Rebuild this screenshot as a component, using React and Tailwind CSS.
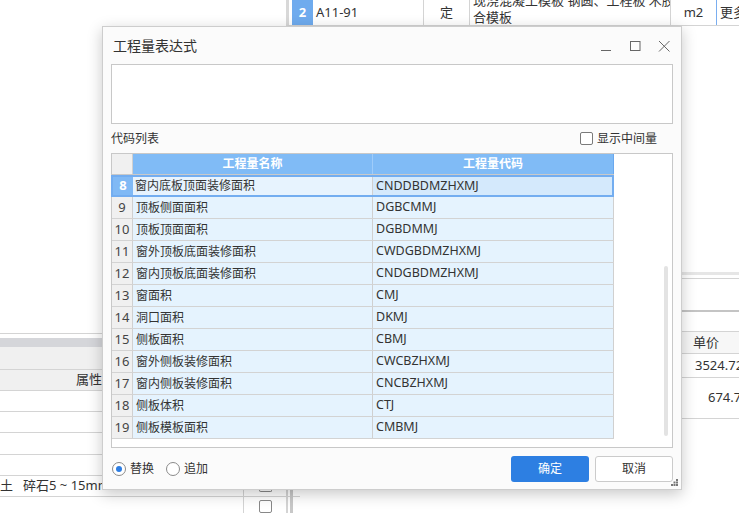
import { useState } from "react";

const rows = [
  ["8", "窗内底板顶面装修面积", "CNDDBDMZHXMJ"],
  ["9", "顶板侧面面积", "DGBCMMJ"],
  ["10", "顶板顶面面积", "DGBDMMJ"],
  ["11", "窗外顶板底面装修面积", "CWDGBDMZHXMJ"],
  ["12", "窗内顶板底面装修面积", "CNDGBDMZHXMJ"],
  ["13", "窗面积", "CMJ"],
  ["14", "洞口面积", "DKMJ"],
  ["15", "侧板面积", "CBMJ"],
  ["16", "窗外侧板装修面积", "CWCBZHXMJ"],
  ["17", "窗内侧板装修面积", "CNCBZHXMJ"],
  ["18", "侧板体积", "CTJ"],
  ["19", "侧板模板面积", "CMBMJ"],
];

const font = { fontFamily: '"Noto Sans", "Noto Sans CJK SC", sans-serif' };

function Background() {
  return (
    <>
      {/* 上方定额行 */}
      <div className="absolute left-[286px] top-0 right-0 h-[26px] flex border-b border-[#d4d4d4] border-l-[3px] border-l-[#d8d8d8] text-[13px] text-[#333] bg-white">
        <div className="w-[3px]" />
        <div className="w-[21px] bg-[#6fabee] text-white font-bold flex items-center justify-center">2</div>
        <div className="w-[110px] pl-[3px] flex items-center">A11-91</div>
        <div className="w-[46px] border-l border-[#d4d4d4] flex items-center justify-center">定</div>
        <div className="w-[201px] border-l border-[#d4d4d4] pl-[3px] leading-[17px] overflow-hidden whitespace-nowrap">
          <div className="-mt-[8px]">现浇混凝土模板 钢圆、工程板 木胶</div>
          <div>合模板</div>
        </div>
        <div className="w-[46px] border-l border-[#d4d4d4] flex items-center justify-center">m2</div>
        <div className="flex-1 border-l border-[#7aaef0] pl-[3px] flex items-center whitespace-nowrap overflow-hidden">更多</div>
      </div>

      {/* 左下属性面板 */}
      <div className="absolute left-0 top-[333px] w-[300px] bottom-0 flex flex-col border-t border-[#d4d4d4] text-[13px] text-[#333]">
        <div className="h-[4px] bg-white" />
        <div className="h-[9px] bg-[#d5d6da]" />
        <div className="h-[23px] bg-[#f0f0f0] border-b border-[#d4d4d4]" />
        <div className="h-[21px] bg-[#f0f0f0] border-b border-[#d4d4d4] flex items-center pl-[76px]">属性</div>
        <div className="h-[21px] border-b border-[#d4d4d4]" />
        <div className="h-[21px] border-b border-[#d4d4d4]" />
        <div className="h-[22px] border-b border-[#d4d4d4]" />
        <div className="h-[21px] border-b border-[#d4d4d4]" />
        <div className="h-[21px] border-b border-[#d4d4d4] flex items-center whitespace-nowrap">
          <span className="w-[23px]">土</span>
          <span>碎石5 ~ 15mm</span>
        </div>
      </div>
      <div className="absolute left-[243px] top-[490px] w-[50px] bottom-0 flex border-l border-[#d4d4d4]">
        <div className="w-[42px] flex flex-col items-center">
          <div className="w-[13px] h-[2px] border-b border-x border-[#888] rounded-b-[2px]" />
          <div className="mt-[8px] w-[13px] h-[14px] border border-[#888] rounded-[2px]" />
        </div>
        <div className="w-[2px] bg-[#d4d4d4]" />
        <div className="ml-[2px] w-[3px] bg-[#c8c8c8]" />
      </div>

      {/* 右侧价格面板 */}
      <div className="absolute left-[682px] right-0 top-[272px] flex flex-col text-[13px] text-[#333] whitespace-nowrap">
        <div className="h-[3px] bg-[#e6e6e6]" />
        <div className="h-[4px] border-b border-[#d4d4d4]" />
        <div className="h-[33px] border-b-2 border-[#c4c4c4]" />
        <div className="h-[20px] border-b border-[#d4d4d4]" />
        <div className="h-[22px] border-b border-[#d4d4d4] bg-[#f7f7f7] flex items-center pl-[11px]">单价</div>
        <div className="h-[24px] border-b border-[#d4d4d4] flex items-center pl-[13px]">3524.72</div>
        <div className="h-[41px] border-b border-[#d4d4d4] flex items-center pl-[26px]">674.7</div>
      </div>
    </>
  );
}

function Radio({ checked, label, onClick }) {
  return (
    <button onClick={onClick} className="flex items-center gap-[4px] text-[12px] text-[#333]">
      <span className="w-[14px] h-[14px] rounded-full border border-[#8a8a8a] bg-white flex items-center justify-center">
        {checked && <span className="w-[6px] h-[6px] rounded-full bg-[#2c7de3]" />}
      </span>
      {label}
    </button>
  );
}

function Dialog() {
  const [mode, setMode] = useState("replace");
  const [showMid, setShowMid] = useState(false);

  return (
    <div className="absolute left-[102px] top-[26px] w-[580px] h-[464px] bg-[#fbfbfb] border border-[#cdcdcd] shadow-[0_4px_14px_rgba(0,0,0,0.22)] flex flex-col px-[8px]">
      {/* 标题栏 */}
      <div className="h-[37px] flex items-center justify-between">
        <span className="pl-[2px] text-[14px] text-[#333]">工程量表达式</span>
        <div className="flex items-center gap-[17px] pr-[3px] text-[#666]">
          <svg width="12" height="12" viewBox="0 0 12 12"><path d="M1 10.5h10" stroke="#666" strokeWidth="1" /></svg>
          <svg width="12" height="12" viewBox="0 0 12 12"><rect x="1.5" y="1.5" width="9.5" height="9" fill="none" stroke="#666" strokeWidth="1" /></svg>
          <svg width="12" height="12" viewBox="0 0 12 12"><path d="M1 1l10.5 10.5M11.5 1L1 11.5" stroke="#666" strokeWidth="1" /></svg>
        </div>
      </div>

      {/* 表达式输入 */}
      <textarea className="h-[60px] w-full resize-none bg-white border border-[#c8c8c8] outline-none" />

      {/* 代码列表 */}
      <div className="h-[29px] flex items-center justify-between text-[12px] text-[#333]">
        <span>代码列表</span>
        <button onClick={() => setShowMid(!showMid)} className="flex items-center gap-[4px] pr-[16px]">
          <span className="w-[13px] h-[13px] border border-[#7a7a7a] rounded-[2px] bg-white" />
          显示中间量
        </button>
      </div>

      {/* 表格 */}
      <div className="h-[295px] bg-white border border-[#c8c8c8] flex">
        <div className="w-[502px] flex flex-col">
          <div className="h-[21px] flex border-b border-[#c9c9c9]">
            <div className="w-[21px] bg-[#f0f0f0] border-r border-[#d0d0d0]" />
            <div className="w-[240px] bg-[#80bbf6] text-white font-bold text-[12px] flex items-center justify-center border-r border-[#9fccfa]">工程量名称</div>
            <div className="w-[241px] bg-[#80bbf6] text-white font-bold text-[12px] flex items-center justify-center border-r border-[#6aa8ee]">工程量代码</div>
          </div>
          {rows.map(([n, name, code], i) =>
            i === 0 ? (
              <div key={n} className="h-[22px] flex border-2 border-[#73adf0] -ml-px text-[12px] text-[#333]">
                <div className="w-[20px] bg-[#80b9f5] text-white font-bold text-[13px] flex items-center justify-center">{n}</div>
                <div className="w-[240px] bg-[#e7f3fe] flex items-center pl-[2px] border-r border-[#d0d0d0]">{name}</div>
                <div className="w-[239px] bg-[#d4e9fc] flex items-center pl-[3px] text-[12.5px]">{code}</div>
              </div>
            ) : (
              <div key={n} className="h-[22px] flex border-b border-[#d3d3d3] text-[12px] text-[#333]">
                <div className="w-[21px] bg-[#f0f0f0] border-r border-[#d0d0d0] text-[13px] text-[#444] flex items-center justify-center">{n}</div>
                <div className="w-[240px] bg-[#e5f3fe] flex items-center pl-[3px] border-r border-[#d0d0d0]">{name}</div>
                <div className="w-[241px] bg-[#e5f3fe] flex items-center pl-[3px] border-r border-[#d0d0d0] text-[12.5px]">{code}</div>
              </div>
            )
          )}
        </div>
        <div className="flex-1 flex justify-end pr-[4px] pt-[112px] pb-[11px]">
          <div className="w-[4px] rounded-full bg-[#e3e3e3]" />
        </div>
      </div>

      {/* 底部 */}
      <div className="flex-1 flex items-center justify-between">
        <div className="flex items-center gap-[12px] pl-[1px]">
          <Radio checked={mode === "replace"} label="替换" onClick={() => setMode("replace")} />
          <Radio checked={mode === "append"} label="追加" onClick={() => setMode("append")} />
        </div>
        <div className="flex gap-[6px]">
          <button className="w-[78px] h-[26px] rounded-[3px] bg-[#2d7fe2] text-white text-[12px]">确定</button>
          <button className="w-[78px] h-[26px] rounded-[3px] bg-white border border-[#cbcbcb] text-[#333] text-[12px]">取消</button>
        </div>
      </div>

      {/* 缩放角 */}
      <svg className="absolute right-[2px] bottom-[2px]" width="8" height="8" viewBox="0 0 8 8">
        <rect x="5" y="0" width="2" height="2" fill="#777" />
        <rect x="2.5" y="2.5" width="2" height="2" fill="#777" />
        <rect x="5" y="2.5" width="2" height="2" fill="#777" />
        <rect x="0" y="5" width="2" height="2" fill="#777" />
        <rect x="2.5" y="5" width="2" height="2" fill="#777" />
        <rect x="5" y="5" width="2" height="2" fill="#777" />
      </svg>
    </div>
  );
}

export default function App() {
  return (
    <div className="relative w-[739px] h-[513px] overflow-hidden bg-white" style={font}>
      <Background />
      <Dialog />
    </div>
  );
}
